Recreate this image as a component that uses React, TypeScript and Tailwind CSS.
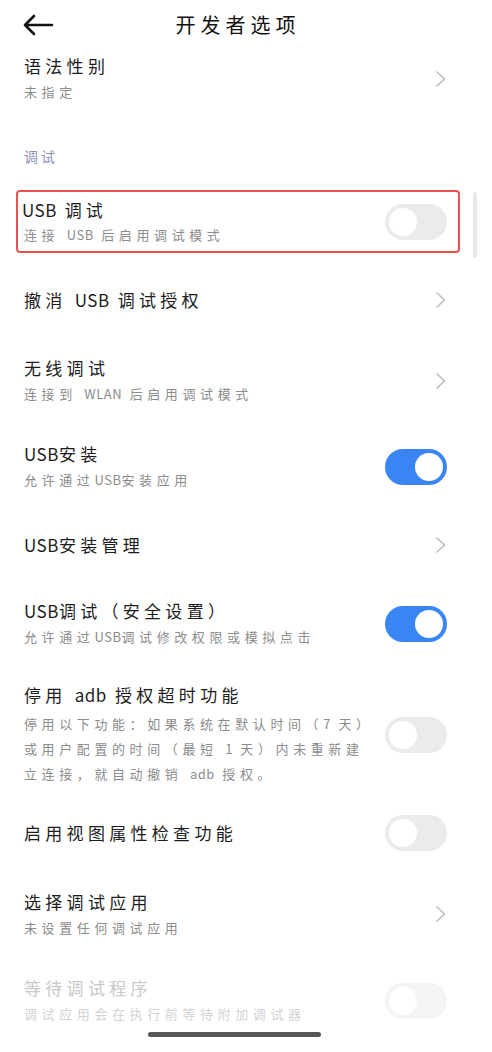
import type { ReactNode } from "react";

const font = { fontFamily: '"Noto Sans CJK SC", "Noto Sans", sans-serif' };

// latin runs are set tighter than the CJK characters
function Txt({ s }: { s: string }) {
  const parts = s.split(/([A-Za-z0-9]+)/);
  return (
    <>
      {parts.map((p, i) =>
        /^[A-Za-z0-9]+$/.test(p) ? (
          <span key={i} className="tracking-[0.5px]">
            {p}
          </span>
        ) : (
          <span key={i}>{p}</span>
        )
      )}
    </>
  );
}

function Chevron() {
  return (
    <svg width="12" height="18" viewBox="0 0 12 18" className="shrink-0">
      <path d="M2 2 L9.5 9 L2 16" fill="none" stroke="#bdbdbd" strokeWidth="1.6" strokeLinecap="round" strokeLinejoin="round" />
    </svg>
  );
}

function Toggle({ on, faded }: { on: boolean; faded?: boolean }) {
  return (
    <div
      className={`flex h-[36px] w-[62px] shrink-0 items-center rounded-full px-[4px] ${
        on ? "justify-end bg-[#3a85f4]" : "justify-start bg-[#ebebeb]"
      } ${faded ? "opacity-50" : ""}`}
    >
      <div className="h-[28px] w-[28px] rounded-full bg-white" />
    </div>
  );
}

function Row({
  title,
  sub,
  right,
  h,
  disabled,
}: {
  title: string;
  sub?: ReactNode;
  right: ReactNode;
  h: string;
  disabled?: boolean;
}) {
  return (
    <div className={`flex items-center justify-between pl-[24px] pr-[45px] ${h}`}>
      <div className="flex flex-col gap-[5px]">
        <div
          className={`text-[17px] leading-[22px] tracking-[4.3px] ${disabled ? "text-[#c9c9c9]" : "text-[#1c1c1c]"}`}
        >
          <Txt s={title} />
        </div>
        {sub && (
          <div
            className={`text-[13px] leading-[20px] tracking-[4.6px] ${disabled ? "text-[#d3d3d3]" : "text-[#8c8c8c]"}`}
          >
            {typeof sub === "string" ? <Txt s={sub} /> : sub}
          </div>
        )}
      </div>
      <div className="flex w-[62px] justify-end">{right}</div>
    </div>
  );
}

export default function App() {
  return (
    <div className="relative h-[1052px] w-[492px] overflow-hidden bg-white" style={font}>
      {/* header */}
      <div className="flex h-[50px] items-center px-[22px]">
        <svg width="32" height="24" viewBox="0 0 32 24">
          <path d="M30 12 H3 M12 3 L3 12 L12 21" fill="none" stroke="#111" strokeWidth="2.6" strokeLinecap="round" strokeLinejoin="round" />
        </svg>
        <div className="flex-1 pr-[48px] text-center text-[20px] tracking-[5px] text-[#111]">开发者选项</div>
      </div>

      <Row h="h-[57px]" title="语法性别" sub="未指定" right={<Chevron />} />

      <div className="h-[83px] pl-[24px] pt-[39px] text-[14px] leading-[20px] tracking-[3px] text-[#8e92b2]">调试</div>

      {/* highlighted row */}
      <div className="relative ml-[16px] mr-[32px] flex h-[63px] items-center justify-between rounded-[4px] border-2 border-[#e8514f] pl-[4px] pr-[11px]">
        <div className="flex flex-col gap-[4px]">
          <div className="text-[17px] leading-[22px] tracking-[4px] text-[#1c1c1c]">
            <Txt s="USB 调试" />
          </div>
          <div className="pl-[2px] text-[13px] leading-[20px] tracking-[4.6px] text-[#8c8c8c]">
            <Txt s="连接 USB 后启用调试模式" />
          </div>
        </div>
        <Toggle on={false} />
        <div className="absolute right-[-19px] top-0 h-[66px] w-[4px] rounded-full bg-[#e8e8e8]" />
      </div>

      <Row h="h-[94px]" title="撤消 USB 调试授权" right={<Chevron />} />
      <Row h="h-[67px]" title="无线调试" sub="连接到 WLAN 后启用调试模式" right={<Chevron />} />
      <Row h="h-[105px]" title="USB安装" sub="允许通过USB安装应用" right={<Toggle on />} />
      <Row h="h-[52px]" title="USB安装管理" right={<Chevron />} />
      <Row h="h-[105px]" title="USB调试（安全设置）" sub="允许通过USB调试修改权限或模拟点击" right={<Toggle on />} />
      <Row
        h="h-[117px]"
        title="停用 adb 授权超时功能"
        sub={
          <div className="leading-[25px]">
            <div><Txt s="停用以下功能：如果系统在默认时间（7 天）" /></div>
            <div><Txt s="或用户配置的时间（最短 1 天）内未重新建" /></div>
            <div><Txt s="立连接，就自动撤销 adb 授权。" /></div>
          </div>
        }
        right={<Toggle on={false} />}
      />
      <Row h="h-[80px]" title="启用视图属性检查功能" right={<Toggle on={false} />} />
      <Row h="h-[82px]" title="选择调试应用" sub="未设置任何调试应用" right={<Chevron />} />
      <Row h="h-[91px]" title="等待调试程序" sub="调试应用会在执行前等待附加调试器" right={<Toggle on={false} faded />} disabled />

      {/* home indicator */}
      <div className="absolute bottom-[15px] left-[148px] h-[5px] w-[173px] rounded-full bg-[#575757]" />
    </div>
  );
}
